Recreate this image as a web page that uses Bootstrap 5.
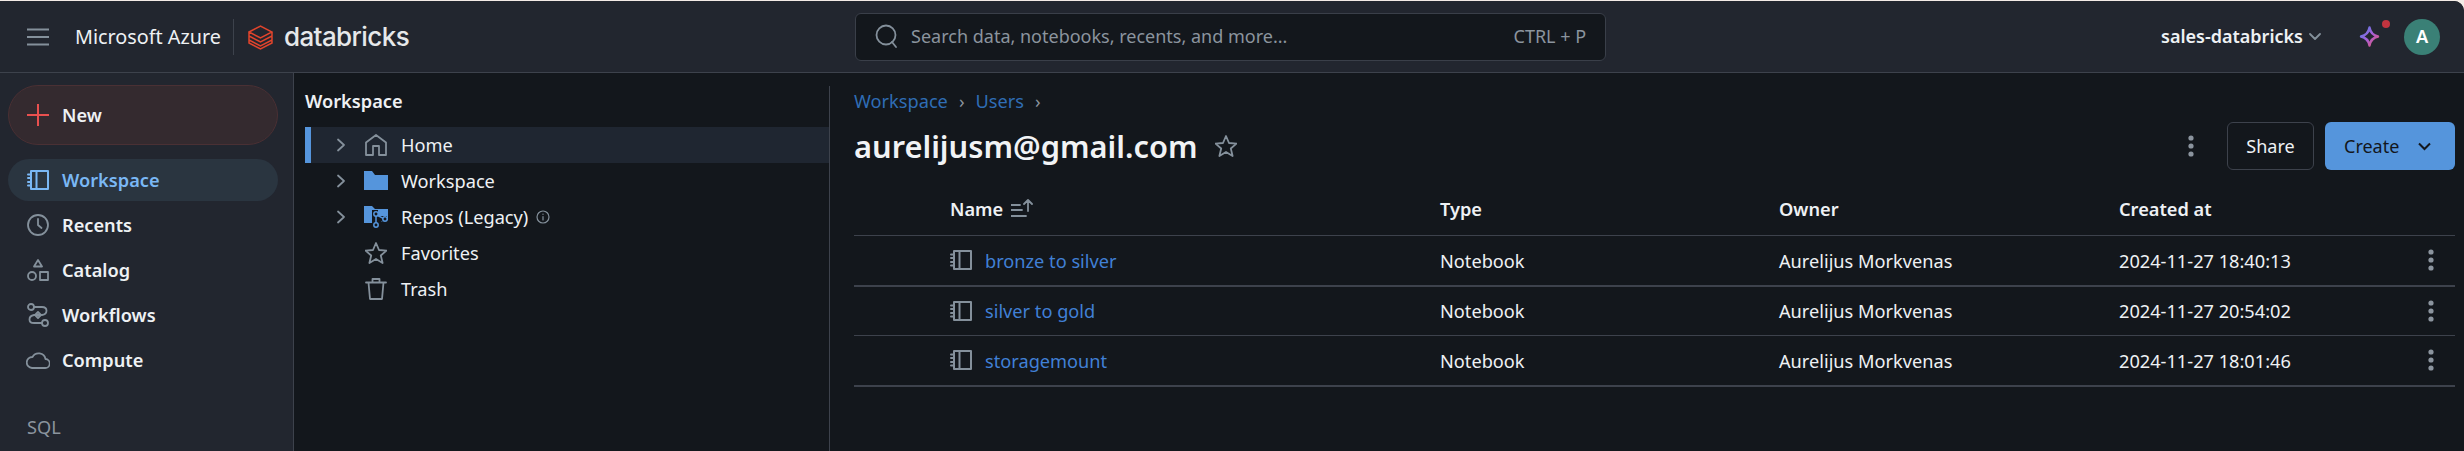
<!DOCTYPE html>
<html lang="en">
<head>
    <meta charset="UTF-8">
    <meta name="viewport" content="width=device-width, initial-scale=1.0">
    <title>Workspace - Databricks</title>
    <link href="https://cdn.jsdelivr.net/npm/bootstrap@5.3.0/dist/css/bootstrap.min.css" rel="stylesheet">
    <style>
        html, body { height: 100%; }
        body {
            background: #f3ebe6;
            font-family: "Noto Sans", "Open Sans", sans-serif;
            font-size: 18.200px;
            color: #eef1f4;
            overflow: hidden;
        }
        svg { flex: none; display: block; }
        .ic { fill: none; stroke: #84909b; stroke-width: 1.2; stroke-linecap: round; stroke-linejoin: round; }
        .app-shell {
            margin-top: 1px;
            height: 450px;
            background: #13171c;
            border-top-right-radius: 10px;
            overflow: hidden;
        }
        .top-bar {
            flex: none;
            height: 72px;
            background: #22262f;
            border-bottom: 1px solid #3d424c;
            padding: 0 24px 0 27px;
        }
        .azure-name { font-size: 19.800px; margin-left: 26px; padding-right: 12px; border-right: 1px solid #3d424c; line-height: 36px; }
        .db-logo { margin-left: 14px; margin-right: 11px; }
        .db-name { font-family: "Inter", sans-serif; font-size: 26px; font-weight: 500; letter-spacing: -0.6px; color: #e6e8ea; }
        .search-box {
            width: 751px;
            height: 48px;
            margin-left: 446px;
            background: #13171c;
            border: 1px solid #3a3f49;
            border-radius: 6px;
            padding: 0 19px 0 19px;
            color: #8b949e;
            font-size: 18px;
        }
        .acct-name { font-weight: 600; font-size: 18px; margin-right: 6px; }
        .assist-btn { position: relative; margin-left: 38px; margin-right: 24px; }
        .assist-dot { position: absolute; top: -6px; right: -10px; width: 8px; height: 8px; border-radius: 50%; background: #c2343f; }
        .user-dot { width: 36px; height: 36px; border-radius: 50%; background: #3a8076; color: #fff; font-weight: 600; }

        .body-row { min-height: 0; }
        .side-rail { width: 294px; background: #22262f; border-right: 1px solid #3d424c; padding: 12px 15px 0 8px; flex: none; }
        .new-pill { height: 60px; border-radius: 30px; background: #342a2f; border: 1px solid #4a3034; padding: 2px 0 0 18px; gap: 13px; font-weight: 600; color: #eef1f4; margin-bottom: 14px; }
        .rail-item { height: 42px; margin-bottom: 3px; border-radius: 21px; padding: 2px 0 0 19px; gap: 13px; font-weight: 600; color: #eef1f4; }
        .rail-item.on { background: #2a3540; color: #7ab8f5; }
        .rail-item.on .ic { stroke: #7ab8f5; }
        .rail-label { margin: 34px 0 0 19px; color: #8b949e; line-height: 24px; }
        .new-pill svg, .rail-item svg, .tree-row svg, .file-table td svg { margin-top: -2px; }

        .tree-pane { width: 536px; flex: none; padding: 3px 0 0 11px; border-right: 1px solid #3d424c; margin-top: 13px; }
        .tree-title { font-weight: 600; line-height: 24px; margin-bottom: 14px; }
        .tree-row { height: 36px; padding: 2px 0 0 31px; border: 0; background: transparent; color: #eef1f4; }
        .tree-row.on { background: #1f2631; box-shadow: inset 6px 0 0 #5595dc; }
        .tree-arrow { margin-right: 19px; }
        .tree-row .tree-icon { margin-right: 14px; }
        .tree-spacer { width: 29px; }
        .tree-folder { margin-left: -1px; }
        .tree-row .tree-folder { margin-right: 13px; }

        .main-pane { flex: 1; min-width: 0; padding: 16px 9px 0 24px; }
        .crumbs { line-height: 24px; color: #8b949e; gap: 11px; }
        .crumbs a { color: #2f6db5; text-decoration: none; }
        .page-head { height: 48px; margin-top: 9px; }
        .page-title { font-size: 30.800px; font-weight: 600; color: #f1f3f5; margin: 0; line-height: 48px; }
        .fav-star { margin-left: 18px; }
        .head-more { margin-right: 32px; }
        .share-btn { width: 87px; height: 48px; background: transparent; color: #eef1f4; border: 1px solid #3d424c; border-radius: 6px; font-size: 18px; margin-right: 11px; padding: 0; }
        .create-btn { width: 130px; height: 48px; background: #5595dc; color: #13171c; border: 0; border-radius: 6px; font-size: 18px; padding: 0 24px 0 19px; }
        .file-table { --bs-table-bg: transparent; --bs-table-color: #eef1f4; margin: 14px 0 0; table-layout: fixed; width: 100%; }
        .file-table th { font-weight: 600; height: 51px; border-bottom: 1px solid #3d424c; padding: 0; vertical-align: middle; }
        .file-table td { height: 49px; border-bottom: 1px solid #3d424c; padding: 2px 0 0; vertical-align: middle; }
        .file-table tr.thick td { height: 51px; border-bottom-width: 2px; }
        .name-cell { padding-left: 96px !important; }
        .file-link { color: #4180d6; text-decoration: none; margin-left: 13px; }
        .row-more { margin-right: 20px; }
    </style>
</head>
<body>
    <svg width="0" height="0" class="position-absolute">
        <symbol id="i-notebook" viewBox="0 0 22 22">
            <path d="M4 2h17v18H4zM9.500 2v18M1 5.500h3M1 9h3M1 13h3M1 16.500h3" stroke-width="2"/>
        </symbol>
        <symbol id="i-more" viewBox="0 0 8 22">
            <circle cx="4" cy="3" r="2.600" fill="#8b949e" stroke="none"/>
            <circle cx="4" cy="11" r="2.600" fill="#8b949e" stroke="none"/>
            <circle cx="4" cy="19" r="2.600" fill="#8b949e" stroke="none"/>
        </symbol>
        <symbol id="i-chev" viewBox="0 0 10 14">
            <path d="M2 1.500 8 7l-6 5.500" stroke-width="1.800"/>
        </symbol>
    </svg>

    <div class="app-shell d-flex flex-column">
        <header class="top-bar d-flex align-items-center">
            <svg width="22" height="18" viewBox="0 0 22 18" class="ic"><path d="M0 1.500h22M0 9h22M0 16.500h22" stroke-width="1.800"/></svg>
            <span class="azure-name">Microsoft Azure</span>
            <svg class="db-logo" width="25" height="26" viewBox="0 0 25 26" fill="none" stroke="#e0442c" stroke-width="1.500"><path d="M1 8 12.500 2 24 8 12.500 14 1 8ZM1 8v4l11.500 6L24 12V8M1 12v4l11.500 6L24 16v-4M1 16v3l11.500 6L24 19v-3"/></svg>
            <span class="db-name">databricks</span>
            <div class="search-box d-flex align-items-center">
                <svg width="24" height="26" viewBox="0 0 24 26" class="ic me-2" style="stroke-width:1.800"><circle cx="11" cy="11" r="9.500"/><path d="m17 18 4 5"/></svg>
                <span class="ms-1">Search data, notebooks, recents, and more...</span>
                <span class="ms-auto">CTRL + P</span>
            </div>
            <div class="ms-auto d-flex align-items-center">
                <span class="acct-name">sales-databricks</span>
                <svg width="12" height="8" viewBox="0 0 12 8" class="ic" style="stroke-width:1.800"><path d="m1 1 5 5 5-5"/></svg>
                <span class="assist-btn">
                    <svg width="21" height="21" viewBox="0 0 21 21" fill="none" stroke-width="2.400"><defs><linearGradient id="spark" x1="0" y1="0" x2="1" y2="1"><stop offset="0" stop-color="#4f7fe8"/><stop offset=".5" stop-color="#a65fd8"/><stop offset="1" stop-color="#e8556f"/></linearGradient></defs><path d="M10.500 1.500c1 5 3.500 8 8.500 9-5 1-7.500 4-8.500 9-1-5-3.500-8-8.500-9 5-1 7.500-4 8.500-9Z" stroke="url(#spark)" stroke-linejoin="round"/></svg>
                    <span class="assist-dot"></span>
                </span>
                <span class="user-dot d-flex align-items-center justify-content-center">A</span>
            </div>
        </header>

        <div class="body-row d-flex flex-grow-1">
            <nav class="side-rail">
                <div class="new-pill d-flex align-items-center">
                    <svg width="22" height="22" viewBox="0 0 22 22" fill="none" stroke="#e9504f" stroke-width="2"><path d="M11 0v22M0 11h22"/></svg>
                    New
                </div>
                <div class="rail-item on d-flex align-items-center">
                    <svg width="22" height="22" class="ic"><use href="#i-notebook"/></svg>Workspace
                </div>
                <div class="rail-item d-flex align-items-center">
                    <svg width="22" height="22" viewBox="0 0 22 22" class="ic" style="stroke-width:1.800"><circle cx="11" cy="11" r="10"/><path d="M11 5v6l3.500 3"/></svg>Recents
                </div>
                <div class="rail-item d-flex align-items-center">
                    <svg width="22" height="22" viewBox="0 0 22 22" class="ic" style="stroke-width:1.800"><path d="M11 1l4 6.500H7zM1 17a4 4 0 1 0 8 0 4 4 0 1 0-8 0ZM13 13h8v8h-8z"/></svg>Catalog
                </div>
                <div class="rail-item d-flex align-items-center">
                    <svg width="22" height="24" viewBox="0 0 22 24" class="ic" style="stroke-width:1.800"><circle cx="4" cy="4" r="3"/><circle cx="18" cy="20" r="3"/><path d="M7 4h8c6 0 6 7 0 8H7c-6 1-6 8 0 8h8M8 12l3-3 3 3-3 3z"/></svg>Workflows
                </div>
                <div class="rail-item d-flex align-items-center">
                    <svg width="24" height="18" viewBox="0 0 24 18" class="ic" style="stroke-width:1.800;margin-left:-1px;margin-right:-1px"><path d="M6 17h13a4.500 4.500 0 0 0 .5-9A7 7 0 0 0 6.500 6 5.500 5.500 0 0 0 6 17Z"/></svg>Compute
                </div>
                <div class="rail-label">SQL</div>
            </nav>

            <section class="tree-pane">
                <div class="tree-title">Workspace</div>
                <div class="list-group list-group-flush">
                    <div class="list-group-item tree-row on d-flex align-items-center">
                        <svg width="10" height="14" class="ic tree-arrow"><use href="#i-chev"/></svg>
                        <svg width="22" height="22" viewBox="0 0 22 22" class="ic tree-icon" style="stroke-width:1.800"><path d="M1 8.500 11 1l10 7.500V21h-7v-9H8v9H1z"/></svg>
                        Home
                    </div>
                    <div class="list-group-item tree-row d-flex align-items-center">
                        <svg width="10" height="14" class="ic tree-arrow"><use href="#i-chev"/></svg>
                        <svg width="24" height="20" viewBox="0 0 24 20" class="tree-folder"><path d="M0 1.500V19h24V4H11L8 0H0z" fill="#5595dc"/></svg>
                        Workspace
                    </div>
                    <div class="list-group-item tree-row d-flex align-items-center">
                        <svg width="10" height="14" class="ic tree-arrow"><use href="#i-chev"/></svg>
                        <svg width="24" height="22" viewBox="0 0 24 22" class="tree-folder"><path d="M0 0v17h10l14-3V3H11L8 0z" fill="#5595dc"/><path d="M8 4h6v6h9v5h-6v7H8z" fill="#13171c"/><g fill="none" stroke="#5595dc" stroke-width="1.500"><circle cx="12" cy="8" r="2.200"/><circle cx="12" cy="19" r="2.200"/><circle cx="21" cy="13" r="2.200"/><path d="M12 10v7M13.800 9.500l5.300 2.800"/></g></svg>
                        Repos (Legacy)
                        <svg width="14" height="14" viewBox="0 0 14 14" class="ic ms-2"><circle cx="7" cy="7" r="6"/><path d="M7 6.500v3.500M7 4v.3"/></svg>
                    </div>
                    <div class="list-group-item tree-row d-flex align-items-center">
                        <span class="tree-spacer"></span>
                        <svg width="22" height="22" viewBox="0 0 22 22" class="ic tree-icon" style="stroke-width:1.800"><path d="m11 1 3 7 7.500.6-5.700 4.900 1.800 7.500-6.600-4-6.600 4 1.800-7.500L.5 8.600 8 8z"/></svg>
                        Favorites
                    </div>
                    <div class="list-group-item tree-row d-flex align-items-center">
                        <span class="tree-spacer"></span>
                        <svg width="22" height="22" viewBox="0 0 22 22" class="ic tree-icon" style="stroke-width:1.800"><path d="M1 4.500h20M3.500 4.500 5 21h12l1.500-16.500M7.500 4.500V1h7v3.500"/></svg>
                        Trash
                    </div>
                </div>
            </section>

            <main class="main-pane">
                <div class="crumbs d-flex align-items-center">
                    <a href="#">Workspace</a><span>›</span><a href="#">Users</a><span>›</span>
                </div>
                <div class="page-head d-flex align-items-center">
                    <h1 class="page-title">aurelijusm@gmail.com</h1>
                    <svg class="ic fav-star" width="22" height="22" viewBox="0 0 22 22" style="stroke-width:1.800"><path d="m11 1 3 7 7.500.6-5.700 4.900 1.800 7.500-6.600-4-6.600 4 1.800-7.500L.5 8.600 8 8z"/></svg>
                    <svg class="ms-auto head-more" width="8" height="22"><use href="#i-more"/></svg>
                    <button class="btn share-btn" type="button">Share</button>
                    <button class="btn create-btn d-flex align-items-center justify-content-between" type="button">
                        Create
                        <svg width="13" height="9" viewBox="0 0 13 9" fill="none" stroke="#13171c" stroke-width="2"><path d="m1 1.500 5.500 5.500L12 1.500"/></svg>
                    </button>
                </div>
                <table class="table file-table">
                    <colgroup>
                        <col style="width:586px"><col style="width:339px"><col style="width:340px"><col>
                    </colgroup>
                    <thead>
                        <tr>
                            <th class="name-cell">
                                <span class="d-inline-flex align-items-center gap-2">Name
                                    <svg width="22" height="20" viewBox="0 0 22 20" class="ic" style="stroke-width:1.800"><path d="M0 6h9M0 11h11M0 17h15M17 12V1m-4 4 4-4 4 4"/></svg>
                                </span>
                            </th>
                            <th>Type</th>
                            <th>Owner</th>
                            <th>Created at</th>
                        </tr>
                    </thead>
                    <tbody>
                        <tr class="thick">
                            <td class="name-cell"><span class="d-flex align-items-center"><svg width="22" height="22" class="ic"><use href="#i-notebook"/></svg><a class="file-link" href="#">bronze to silver</a></span></td>
                            <td>Notebook</td><td>Aurelijus Morkvenas</td>
                            <td><span class="d-flex align-items-center justify-content-between">2024-11-27 18:40:13<svg class="row-more" width="8" height="22"><use href="#i-more"/></svg></span></td>
                        </tr>
                        <tr>
                            <td class="name-cell"><span class="d-flex align-items-center"><svg width="22" height="22" class="ic"><use href="#i-notebook"/></svg><a class="file-link" href="#">silver to gold</a></span></td>
                            <td>Notebook</td><td>Aurelijus Morkvenas</td>
                            <td><span class="d-flex align-items-center justify-content-between">2024-11-27 20:54:02<svg class="row-more" width="8" height="22"><use href="#i-more"/></svg></span></td>
                        </tr>
                        <tr class="thick">
                            <td class="name-cell"><span class="d-flex align-items-center"><svg width="22" height="22" class="ic"><use href="#i-notebook"/></svg><a class="file-link" href="#">storagemount</a></span></td>
                            <td>Notebook</td><td>Aurelijus Morkvenas</td>
                            <td><span class="d-flex align-items-center justify-content-between">2024-11-27 18:01:46<svg class="row-more" width="8" height="22"><use href="#i-more"/></svg></span></td>
                        </tr>
                    </tbody>
                </table>
            </main>
        </div>
    </div>
    <script src="https://cdn.jsdelivr.net/npm/bootstrap@5.3.0/dist/js/bootstrap.bundle.min.js"></script>
</body>
</html>
